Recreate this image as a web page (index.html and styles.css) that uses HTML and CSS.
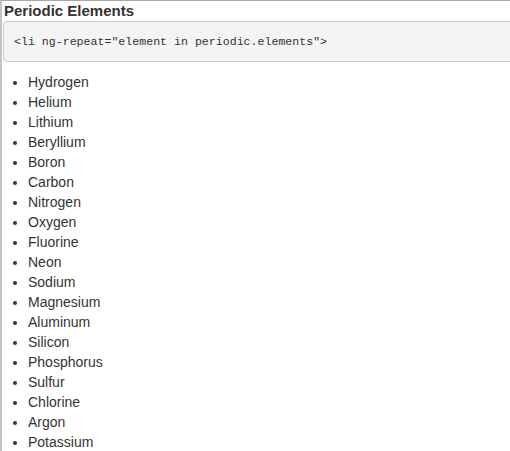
FILE: index.html
```html
<!DOCTYPE html>
<html>
<head>
<meta charset="utf-8">
<link rel="stylesheet" href="styles.css">
</head>
<body>
<div class="panel">
  <h3 class="title">Periodic Elements</h3>
  <pre class="code">&lt;li ng-repeat="element in periodic.elements"&gt;</pre>
  <ul class="list">
    <li>Hydrogen</li>
    <li>Helium</li>
    <li>Lithium</li>
    <li>Beryllium</li>
    <li>Boron</li>
    <li>Carbon</li>
    <li>Nitrogen</li>
    <li>Oxygen</li>
    <li>Fluorine</li>
    <li>Neon</li>
    <li>Sodium</li>
    <li>Magnesium</li>
    <li>Aluminum</li>
    <li>Silicon</li>
    <li>Phosphorus</li>
    <li>Sulfur</li>
    <li>Chlorine</li>
    <li>Argon</li>
    <li>Potassium</li>
  </ul>
</div>
</body>
</html>
```
FILE: styles.css
```css
html, body {
  margin: 0;
  padding: 0;
  overflow: hidden;
  background: #fff;
}
.panel {
  box-sizing: border-box;
  height: 100vh;
  overflow: hidden;
  border-top: 1px solid #a8a8a8;
  border-left: 2px solid #c4c4c4;
  padding-left: 1px;
  font-family: "Liberation Sans", Arial, sans-serif;
  color: #333;
}
.title {
  margin: 0;
  padding-left: 1px;
  font-size: 15px;
  font-weight: bold;
  line-height: 20px;
  color: #333;
}
.code {
  margin: 0 -20px 0 0;
  padding: 10px 10px;
  background: #f4f4f4;
  border: 1px solid #cccccc;
  border-radius: 4px;
  font-family: "Liberation Mono", "DejaVu Sans Mono", monospace;
  font-size: 11.6px;
  line-height: 19px;
  color: #333;
}
.list {
  margin: 10px 0 0 0;
  padding-left: 25px;
  font-size: 14px;
  line-height: 20px;
}
```
